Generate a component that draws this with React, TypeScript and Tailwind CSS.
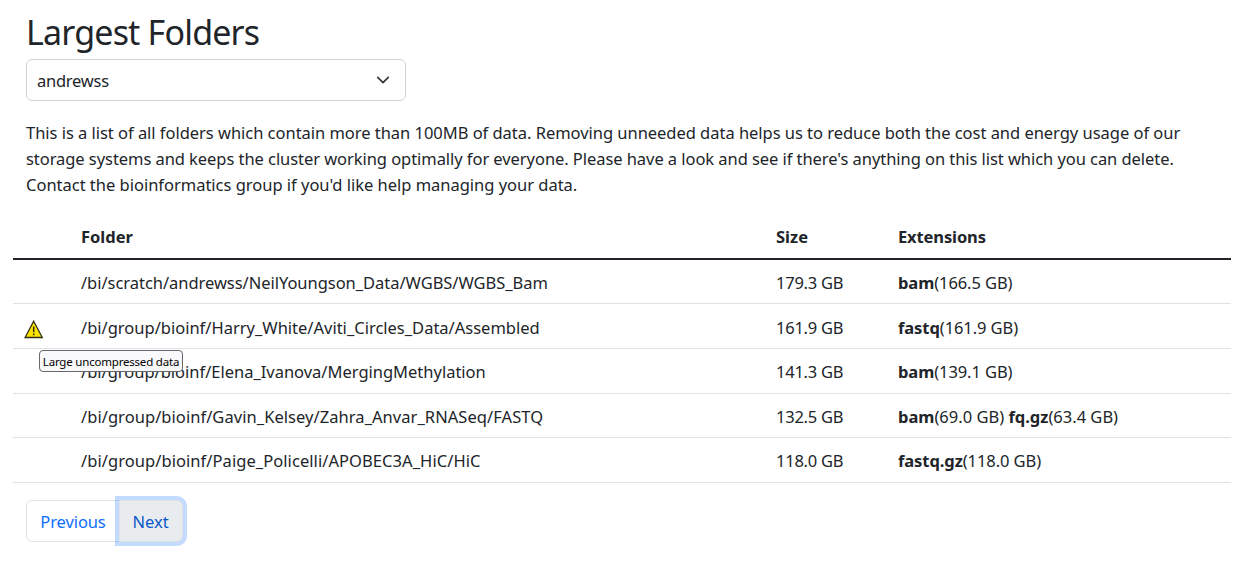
import type { ReactNode } from "react";

type Extension = { name: string; size: string };
type Folder = {
  path: string;
  pathClass: string;
  size: string;
  rowClass: string;
  warning?: string;
  extensions: Extension[];
};

const folders: Folder[] = [
  {
    path: "/bi/scratch/andrewss/NeilYoungson_Data/WGBS/WGBS_Bam",
    pathClass: "tracking-[-0.035px]",
    size: "179.3 GB",
    rowClass: "h-[44px] pt-[2px]",
    extensions: [{ name: "bam", size: "166.5 GB" }],
  },
  {
    path: "/bi/group/bioinf/Harry_White/Aviti_Circles_Data/Assembled",
    pathClass: "",
    size: "161.9 GB",
    rowClass: "h-[45px] pt-[3px]",
    warning: "Large uncompressed data",
    extensions: [{ name: "fastq", size: "161.9 GB" }],
  },
  {
    path: "/bi/group/bioinf/Elena_Ivanova/MergingMethylation",
    pathClass: "tracking-[-0.01px]",
    size: "141.3 GB",
    rowClass: "h-[45px] pt-[2px]",
    extensions: [{ name: "bam", size: "139.1 GB" }],
  },
  {
    path: "/bi/group/bioinf/Gavin_Kelsey/Zahra_Anvar_RNASeq/FASTQ",
    pathClass: "tracking-[0.055px]",
    size: "132.5 GB",
    rowClass: "h-[44px] pt-[2px]",
    extensions: [
      { name: "bam", size: "69.0 GB" },
      { name: "fq.gz", size: "63.4 GB" },
    ],
  },
  {
    path: "/bi/group/bioinf/Paige_Policelli/APOBEC3A_HiC/HiC",
    pathClass: "tracking-[0.065px]",
    size: "118.0 GB",
    rowClass: "h-[45px] pt-[2px]",
    extensions: [{ name: "fastq.gz", size: "118.0 GB" }],
  },
];

function Row({ className, children }: { className: string; children: ReactNode }) {
  return (
    <div role="row" className={`grid grid-cols-[68px_695px_122px_1fr] items-center ${className}`}>
      {children}
    </div>
  );
}

function Warning({ label }: { label: string }) {
  return (
    <div className="relative ml-[11px] w-5">
      <svg viewBox="0 0 20 22" className="-mb-[2px] block h-[22px] w-5">
        <path d="M9.7 3.2 18.3 19.5H1.1Z" fill="#fbe300" stroke="#33301a" strokeWidth="1.3" />
        <path d="M9.7 8.6V14.2M9.7 15.6V17.2" stroke="#33301a" strokeWidth="1.5" />
      </svg>
      <div className="absolute top-[32px] left-[15px] z-10 flex h-[22px] w-[144px] items-center justify-center rounded-[4px] border border-[#67676c] bg-[#f9f9fb] pt-[2px] text-[11.5px] tracking-[-0.2px] whitespace-nowrap text-black">
        <span>{label}</span>
      </div>
    </div>
  );
}

export default function App() {
  return (
    <main className="h-[561px] w-[1244px] overflow-hidden bg-white pl-[13px] font-['Noto_Sans',sans-serif] text-[16.5px] leading-[26px] text-[#212529]">
      <div className="ml-[13px]">
        <h1 className="h-[59px] pt-[11px] text-[34px] leading-[42px] tracking-[-0.81px]">
          <span>Largest Folders</span>
        </h1>
        <div className="flex h-[42px] w-[380px] items-center justify-between rounded-[6px] border border-[#ced4da] pr-[15px] pl-[10px]">
          <span className="pt-[2px] tracking-[-0.25px]">andrewss</span>
          <svg viewBox="0 0 16 16" className="mb-[1px] h-[14px] w-[14px]" fill="none">
            <path d="m2 5 6 6 6-6" stroke="#343a40" strokeWidth="2" strokeLinecap="round" strokeLinejoin="round" />
          </svg>
        </div>
        <p className="mt-[19px] whitespace-nowrap">
          <span className="tracking-[-0.03px]">This is a list of all folders which contain more than 100MB of data. Removing unneeded data helps us to reduce both the cost and energy usage of our</span>
          <br />
          <span className="tracking-[-0.06px]">storage systems and keeps the cluster working optimally for everyone. Please have a look and see if there's anything on this list which you can delete.</span>
          <br />
          <span className="tracking-[-0.015px]">Contact the bioinformatics group if you'd like help managing your data.</span>
        </p>
      </div>

      <div role="table" className="mt-[17px] w-[1218px] whitespace-nowrap">
        <Row className="h-[45px] border-b-2 border-[#212529] font-bold">
          <span />
          <span>Folder</span>
          <span>Size</span>
          <span className="tracking-[-0.12px]">Extensions</span>
        </Row>
        {folders.map((f) => (
          <Row key={f.path} className={`border-b border-[#dee2e6] ${f.rowClass}`}>
            {f.warning ? <Warning label={f.warning} /> : <span />}
            <span className={f.pathClass}>{f.path}</span>
            <span className="tracking-[-0.23px]">{f.size}</span>
            <span className={f.extensions.length > 1 ? "" : "tracking-[-0.08px]"}>
              {f.extensions.map((e, i) => (
                <span key={e.name}>
                  {i > 0 && " "}
                  <b>{e.name}</b>({e.size})
                </span>
              ))}
            </span>
          </Row>
        ))}
      </div>

      <nav className="mt-[17px] ml-[13px] flex h-[42px]">
        <button className="w-[94px] rounded-l-[6px] border border-[#dee2e6] pt-[2px] tracking-[-0.1px] text-[#0d6efd]">Previous</button>
        <button className="relative -ml-px w-[64px] rounded-r-[6px] border border-[#dee2e6] bg-[#e9ecef] pt-[2px] pr-px text-[#0a58ca] shadow-[0_0_0_4px_rgba(13,110,253,0.25)]">
          Next
        </button>
      </nav>
    </main>
  );
}
